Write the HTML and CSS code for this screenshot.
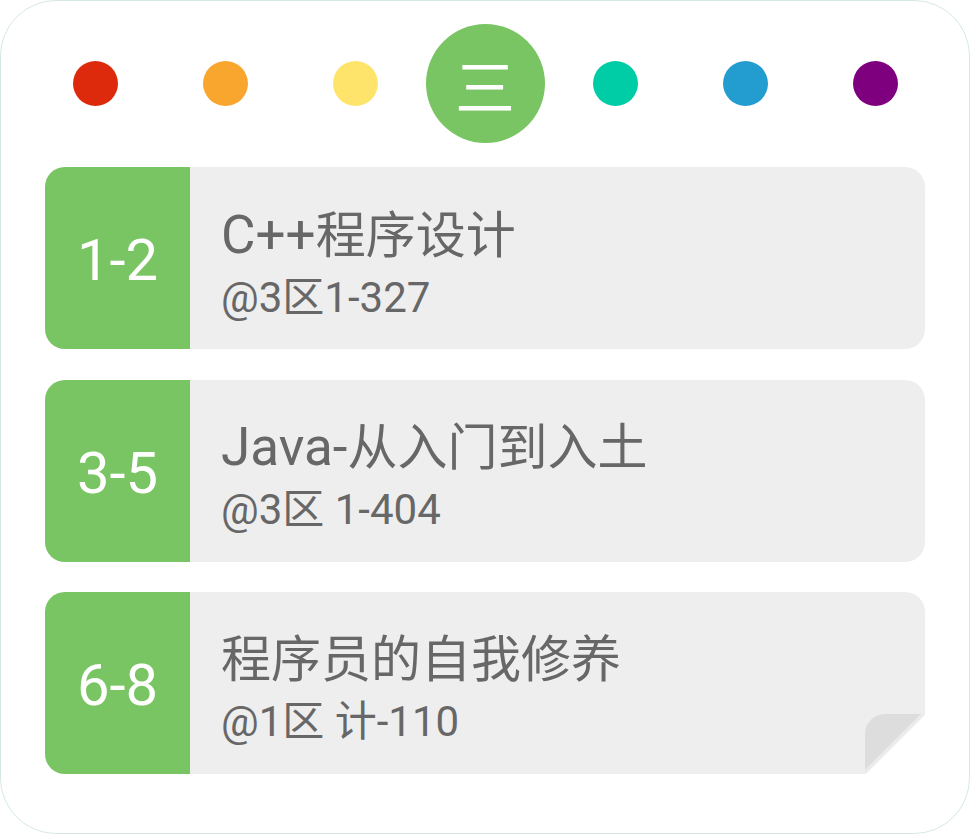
FILE: index.html
```html
<!DOCTYPE html>
<html lang="zh-CN">
<head>
<meta charset="utf-8">
<title>课程表</title>
<link rel="stylesheet" href="styles.css">
</head>
<body>
<div class="card">
  <div class="days">
    <div class="cell"><span class="dot red"></span></div>
    <div class="cell"><span class="dot orange"></span></div>
    <div class="cell"><span class="dot yellow"></span></div>
    <div class="cell"><span class="today">三</span></div>
    <div class="cell"><span class="dot teal"></span></div>
    <div class="cell"><span class="dot blue"></span></div>
    <div class="cell"><span class="dot purple"></span></div>
  </div>
  <div class="list">
    <div class="row">
      <div class="time">1-2</div>
      <div class="info">
        <div class="title"><span class="lat">C++</span>程序设计</div>
        <div class="place">@3区1-327</div>
      </div>
    </div>
    <div class="row">
      <div class="time">3-5</div>
      <div class="info">
        <div class="title"><span class="lat">Java-</span>从入门到入土</div>
        <div class="place">@3区 1-404</div>
      </div>
    </div>
    <div class="row curl">
      <div class="time">6-8</div>
      <div class="info">
        <div class="title">程序员的自我修养</div>
        <div class="place">@1区 计-110</div>
      </div>
    </div>
  </div>
</div>
</body>
</html>
```
FILE: styles.css
```css
* { box-sizing: border-box; }
html, body { margin: 0; padding: 0; background: #ffffff; }
body { font-family: Roboto, "Noto Sans CJK SC", sans-serif; }

.card {
  width: 970px;
  height: 834px;
  border: 1px solid #d6e9e0;
  border-radius: 56px;
  background: #ffffff;
  padding-top: 22px;
}

.days {
  display: flex;
  align-items: center;
  height: 121px;
  padding-left: 29px;
}
.cell {
  width: 130px;
  display: flex;
  justify-content: center;
  align-items: center;
}
.dot {
  display: block;
  width: 45px;
  height: 45px;
  border-radius: 50%;
}
.red { background: #de2a0c; }
.orange { background: #f9a62f; }
.yellow { background: #fee46b; }
.teal { background: #00cca6; }
.blue { background: #239ccf; }
.purple { background: #7f007f; }

.today {
  width: 119px;
  height: 119px;
  border-radius: 50%;
  background: #7ac563;
  color: #ffffff;
  font-family: "Noto Sans CJK SC", sans-serif;
  font-size: 60px;
  line-height: 119px;
  text-align: center;
}

.list {
  margin-top: 23px;
  padding: 0 44px;
  display: flex;
  flex-direction: column;
  gap: 30.5px;
}
.row {
  position: relative;
  height: 182px;
  display: flex;
  border-radius: 20px;
  background: #eeeeee;
  overflow: hidden;
}
.time {
  width: 145px;
  flex: none;
  background: #7ac563;
  color: #ffffff;
  font-size: 58px;
  display: flex;
  align-items: center;
  justify-content: center;
  padding-top: 4px;
}
.info {
  padding-left: 31px;
  padding-top: 38.5px;
  display: flex;
  flex-direction: column;
  color: #676767;
}
.title {
  font-size: 50px;
  line-height: 58px;
  white-space: nowrap;
}
.lat { font-size: 53px; }
.place {
  font-size: 42px;
  line-height: 48px;
  margin-top: 9px;
}

.curl { border-bottom-right-radius: 0; }
.curl::after {
  content: "";
  position: absolute;
  right: 0;
  bottom: 0;
  width: 60px;
  height: 60px;
  border-top-left-radius: 20px;
  background: linear-gradient(to top left, #ffffff 49%, #ebebeb 49.5%, #ebebeb 53%, #dddddd 54%);
}
```
